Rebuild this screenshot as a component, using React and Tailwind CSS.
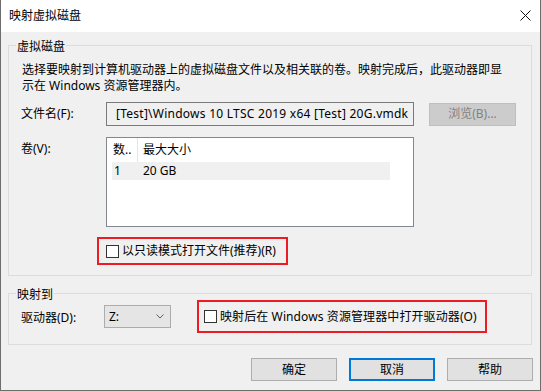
import React from 'react'

const font = "font-['Noto_Sans','Noto_Sans_CJK_SC',sans-serif]"

const CheckBox = () => (
  <span className="inline-block w-[13px] h-[13px] border border-[#333333] bg-white shrink-0" />
)

const Button = ({ children, focused }) => (
  <div
    className={`w-[86px] h-[23px] flex items-center justify-center bg-[#e1e1e1] ${
      focused ? 'border-2 border-[#0078d7]' : 'border border-[#adadad]'
    }`}
  >
    {children}
  </div>
)

const GroupBox = ({ title, className, children }) => (
  <div className={`relative border border-[#dcdcdc] ${className}`}>
    <span className="absolute left-[7px] top-[-7px] px-[1px] bg-[#f0f0f0] leading-[16px]">{title}</span>
    {children}
  </div>
)

export default function App() {
  return (
    <div className={`w-[541px] h-[391px] flex flex-col bg-[#f0f0f0] border-x border-b border-[#6d6d6d] text-[12px] text-black ${font}`}>
      {/* title bar */}
      <div className="h-[32px] bg-white flex items-center justify-between pl-[8px] pr-[9px] shrink-0">
        <span className="leading-[16px]">映射虚拟磁盘</span>
        <svg width="11" height="11" viewBox="0 0 11 11" className="mt-[-1px]">
          <path d="M0.5 0.5 L10.5 10.5 M10.5 0.5 L0.5 10.5" stroke="#111" strokeWidth="1" />
        </svg>
      </div>

      <div className="flex-1 pl-[7px] pr-[8px] pt-[13px]">
        <GroupBox title="虚拟磁盘" className="h-[231px]">
          <p className="pl-[13px] pt-[16px] w-[500px] leading-[16px]">
            选择要映射到计算机驱动器上的虚拟磁盘文件以及相关联的卷。映射完成后，此驱动器即显示在 Windows 资源管理器内。
          </p>

          <div className="flex items-center mt-[8px] pl-[12px]">
            <span className="w-[85px]">文件名(F):</span>
            <div className="w-[308px] h-[24px] border border-[#7a7a7a] bg-[#f0f0f0] flex items-center pl-[9px] whitespace-nowrap overflow-hidden tracking-[0.25px]">
              [Test]\Windows 10 LTSC 2019 x64 [Test] 20G.vmdk
            </div>
            <div className="ml-[15px] w-[87px] h-[23px] bg-[#cccccc] border border-[#bfbfbf] text-[#838383] flex items-center justify-center">
              浏览(B)...
            </div>
          </div>

          <div className="flex items-start mt-[11px] pl-[12px]">
            <span className="w-[85px] leading-[16px] pt-[4px]">卷(V):</span>
            <div className="w-[308px] h-[90px] border border-[#828790] bg-white pl-[5px]">
              <div className="flex h-[24px] items-center">
                <span className="w-[26px] h-full border-r border-[#e5e5e5] pl-[1px] flex items-center">数..</span>
                <span className="w-[252px] pl-[5px]">最大大小</span>
              </div>
              <div className="flex h-[18px] items-center bg-[#f0f0f0] w-[278px]">
                <span className="w-[26px] pl-[2px]">1</span>
                <span className="pl-[5px]">20 GB</span>
              </div>
            </div>
          </div>

          <div className="mt-[10px] ml-[88px] w-[191px] h-[28px] border-2 border-[#ed1c24] flex items-center pl-[7px] gap-[3px]">
            <CheckBox />
            <span>以只读模式打开文件(推荐)(R)</span>
          </div>
        </GroupBox>

        <GroupBox title="映射到" className="mt-[17px] h-[52px]">
          <div className="flex items-center pl-[12px] pt-[6px]">
            <span className="w-[83px] pt-[2px]">驱动器(D):</span>
            <div className="w-[67px] h-[23px] bg-[#e5e5e5] border border-[#acacac] flex items-center justify-between pl-[4px] pr-[6px]">
              <span>Z:</span>
              <svg width="8" height="5" viewBox="0 0 8 5">
                <path d="M0.5 0.5 L4 4 L7.5 0.5" stroke="#606060" strokeWidth="1" fill="none" />
              </svg>
            </div>
            <div className="ml-[26px] w-[290px] h-[33px] border-2 border-[#ed1c24] flex items-center pl-[5px] gap-[3px] tracking-[0.1px]">
              <CheckBox />
              <span>映射后在 Windows 资源管理器中打开驱动器(O)</span>
            </div>
          </div>
        </GroupBox>

        <div className="flex justify-end gap-[12px] mt-[13px] -mr-px">
          <Button>确定</Button>
          <Button focused>取消</Button>
          <Button>帮助</Button>
        </div>
      </div>
    </div>
  )
}
